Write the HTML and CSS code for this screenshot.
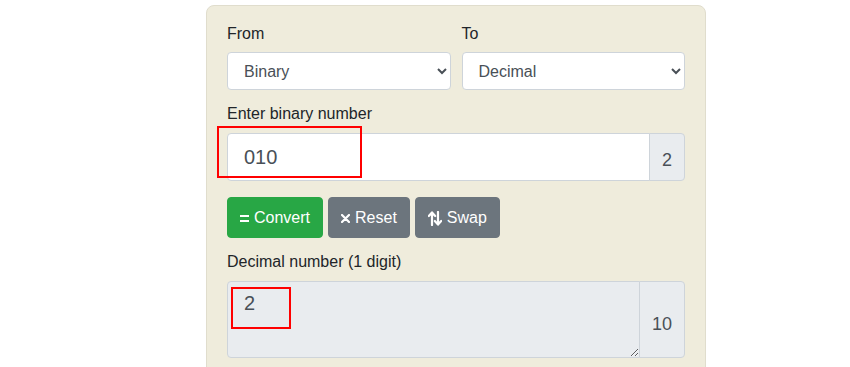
FILE: index.html
```html
<!DOCTYPE html>
<html lang="en">
<head>
    <meta charset="UTF-8">
    <meta name="viewport" content="width=device-width, initial-scale=1.0">
    <title>Binary to Decimal Converter</title>
    <link rel="stylesheet" href="styles.css">
</head>
<body>

    <div class="panel">
        <div class="row">
            <div class="col">
                <label for="from">From</label>
                <select id="from" class="select">
                    <option>Binary</option>
                    <option>Octal</option>
                    <option>Decimal</option>
                    <option>Hexadecimal</option>
                </select>
            </div>
            <div class="col">
                <label for="to">To</label>
                <select id="to" class="select">
                    <option>Binary</option>
                    <option>Octal</option>
                    <option selected>Decimal</option>
                    <option>Hexadecimal</option>
                </select>
            </div>
        </div>

        <div class="field">
            <label for="num">Enter binary number</label>
            <div class="input-group">
                <input type="text" id="num" class="input" value="010">
                <span class="addon">2</span>
                <span class="mark mark-input"></span>
            </div>
        </div>

        <div class="buttons">
            <button class="btn green">
                <svg width="9" height="7" viewBox="0 0 9 7"><rect x="0" y="0" width="9" height="2" fill="#fff"/><rect x="0" y="5" width="9" height="2" fill="#fff"/></svg>
                Convert
            </button>
            <button class="btn gray">
                <svg width="9" height="9" viewBox="0 0 9 9"><path d="M1 1 L8 8 M8 1 L1 8" stroke="#fff" stroke-width="2.2" stroke-linecap="round"/></svg>
                Reset
            </button>
            <button class="btn gray">
                <svg width="14" height="15" viewBox="0 0 14 15"><path d="M4 14 V2 M0.8 5 L4 1.4 L7.2 5" stroke="#fff" stroke-width="2.2" fill="none" stroke-linecap="round" stroke-linejoin="round"/><path d="M10 1 V13 M6.8 10 L10 13.6 L13.2 10" stroke="#fff" stroke-width="2.2" fill="none" stroke-linecap="round" stroke-linejoin="round"/></svg>
                Swap
            </button>
        </div>

        <div class="field">
            <label for="result">Decimal number (1 digit)</label>
            <div class="input-group">
                <textarea id="result" class="input output" rows="2" readonly>2</textarea>
                <span class="addon tall">10</span>
                <span class="mark mark-output"></span>
            </div>
        </div>
    </div>

</body>
</html>
```

FILE: styles.css
```css
body {
    margin: 0;
    font-family: "Liberation Sans", Arial, sans-serif;
    font-size: 16px;
    line-height: 1.5;
    color: #212529;
    background: #fff;
}

.panel {
    box-sizing: border-box;
    width: 500px;
    margin: 5px 0 0 206px;
    padding: 16px 20px 20px;
    background: #efecdc;
    border: 1px solid #e0ddcd;
    border-radius: 8px;
}

label {
    display: block;
    margin-bottom: 7px;
}

.row {
    display: grid;
    grid-template-columns: 1fr 1fr;
    gap: 11px;
}

.row label {
    margin-bottom: 6px;
}

.select {
    box-sizing: border-box;
    width: 100%;
    height: 38px;
    padding: 6px 12px;
    font-family: inherit;
    font-size: 16px;
    color: #495057;
    background-color: #fff;
    border: 1px solid #ced4da;
    border-radius: 4px;
}

.field {
    margin-top: 12px;
}

.input-group {
    position: relative;
    display: flex;
}

.input {
    box-sizing: border-box;
    flex: 1;
    min-width: 0;
    height: 48px;
    padding: 8px 16px;
    font-family: inherit;
    font-size: 20px;
    line-height: 1.5;
    color: #495057;
    background: #fff;
    border: 1px solid #ced4da;
    border-radius: 4px 0 0 4px;
    outline: none;
}

.output {
    height: 77px;
    padding-top: 6px;
    background: #e9ecef;
    resize: vertical;
}

.addon {
    display: flex;
    align-items: center;
    box-sizing: border-box;
    margin-left: -1px;
    padding: 7px 12px 0;
    font-size: 18px;
    color: #495057;
    background: #e9ecef;
    border: 1px solid #ced4da;
    border-radius: 0 4px 4px 0;
}

.addon.tall {
    padding-top: 10px;
}

/* red highlight boxes */
.mark {
    position: absolute;
    box-sizing: border-box;
    border: 2px solid #f00;
    pointer-events: none;
}

.mark-input {
    left: -10px;
    top: -7px;
    width: 145px;
    height: 52px;
}

.mark-output {
    left: 4px;
    top: 6px;
    width: 60px;
    height: 42px;
}

.buttons {
    display: flex;
    gap: 5px;
    margin-top: 16px;
}

.btn {
    display: flex;
    align-items: center;
    gap: 5px;
    padding: 8px 12px 7px;
    font-family: inherit;
    font-size: 16px;
    line-height: 24px;
    color: #fff;
    border: 1px solid transparent;
    border-radius: 4px;
    cursor: pointer;
}

.green {
    background: #28a745;
    border-color: #28a745;
}

.gray {
    background: #6c757d;
    border-color: #6c757d;
}
```
